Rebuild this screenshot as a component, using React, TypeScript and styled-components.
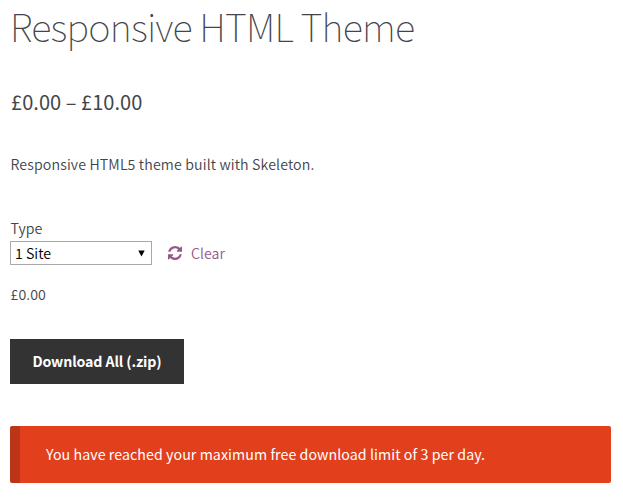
import React from "react";
import styled, { createGlobalStyle } from "styled-components";

const GlobalStyle = createGlobalStyle`
  * { box-sizing: border-box; }
  body {
    margin: 0;
    background: #fff;
    color: #43454b;
    font-family: "Source Sans Pro", "Noto Sans CJK SC", "Noto Sans", sans-serif;
    font-size: 14.2px;
    font-weight: 350;
    line-height: 24px;
  }
`;

const Page = styled.main`
  display: flex;
  flex-direction: column;
  align-items: flex-start;
  width: 611px;
  padding-left: 10px;
`;

const Title = styled.h1`
  margin: 0;
  padding-bottom: 1px;
  font-size: 38px;
  font-weight: 100;
  line-height: 52px;
  letter-spacing: -0.78px;
  white-space: nowrap;
`;

const Price = styled.p`
  margin: 33px 0 0;
  padding-left: 1px;
  font-size: 20px;
  font-weight: 400;
  line-height: 32px;
  letter-spacing: 0.05px;
`;

const Description = styled.p`
  margin: 34px 0 0;
  padding-left: 0.5px;
  letter-spacing: 0.13px;
`;

const Label = styled.label`
  margin-top: 40px;
  padding-left: 0.5px;
`;

const Row = styled.div`
  display: flex;
  align-items: center;
  height: 24px;
  margin-top: 1px;
`;

const Select = styled.button`
  display: flex;
  align-items: center;
  justify-content: space-between;
  width: 142px;
  height: 24px;
  padding: 0 6px 0 4px;
  border: 1px solid #a9a9a9;
  background: #fff;
  color: #000;
  font: inherit;
  line-height: 22px;
`;

const Clear = styled.a`
  display: flex;
  align-items: center;
  gap: 9px;
  margin-left: 16px;
  color: #96588a;
`;

const VariationPrice = styled.p`
  margin: 17px 0 0;
  padding-left: 0.5px;
  letter-spacing: 0.1px;
`;

const Download = styled.button`
  width: 174px;
  height: 45px;
  margin-top: 33px;
  padding: 0 0 2px;
  border: 0;
  background: #333;
  color: #fff;
  font: inherit;
  font-weight: 700;
  letter-spacing: -0.12px;
`;

const Notice = styled.div`
  width: 601px;
  height: 57px;
  margin-top: 42px;
  padding: 16px 25px 16px 26px;
  border-left: 10px solid #bd3519;
  border-radius: 2px;
  background: #e2401c;
  color: #fff;
  font-weight: 400;
  letter-spacing: 0.07px;
`;

export default function App() {
  return (
    <>
      <GlobalStyle />
      <Page>
        <Title>Responsive HTML Theme</Title>
        <Price>£0.00 – £10.00</Price>
        <Description>Responsive HTML5 theme built with Skeleton.</Description>
        <Label>Type</Label>
        <Row>
          <Select type="button">
            <span>1 Site</span>
            <svg width="7" height="7" viewBox="0 0 7 7" fill="#000">
              <path d="M0.3 0.500h6.400L3.500 6.500z" />
            </svg>
          </Select>
          <Clear>
            <svg width="14" height="14" viewBox="0 0 1536 1536" fill="currentColor">
              <path d="M1511 928q0 5-1 7-64 268-268 434.5t-478 166.5q-146 0-282.5-55t-243.5-157l-129 129q-19 19-45 19t-45-19-19-45v-448q0-26 19-45t45-19h448q26 0 45 19t19 45-19 45l-137 137q71 66 161 102t187 36q134 0 250-65t186-179q11-17 53-117 8-23 30-23h192q13 0 22.5 9.500t9.500 22.500zm25-800v448q0 26-19 45t-45 19h-448q-26 0-45-19t-19-45 19-45l138-138q-148-137-349-137-134 0-250 65t-186 179q-11 17-53 117-8 23-30 23h-199q-13 0-22.500-9.500t-9.500-22.500v-7q65-268 270-434.500t480-166.500q146 0 284 55.500t245 156.500l130-129q19-19 45-19t45 19 19 45z" />
            </svg>
            <span>Clear</span>
          </Clear>
        </Row>
        <VariationPrice>£0.00</VariationPrice>
        <Download type="button">Download All (.zip)</Download>
        <Notice>You have reached your maximum free download limit of 3 per day.</Notice>
      </Page>
    </>
  );
}
